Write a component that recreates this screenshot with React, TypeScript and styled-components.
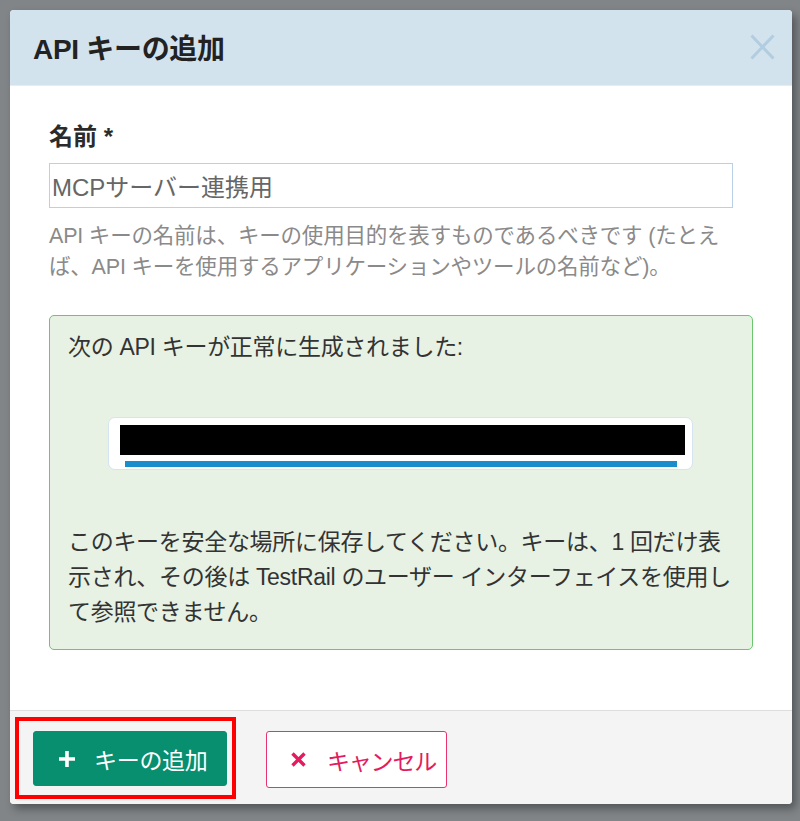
import React from "react";
import styled, { createGlobalStyle } from "styled-components";

const GlobalStyle = createGlobalStyle`
  html, body { margin: 0; padding: 0; background: #818588; }
  body { font-family: "Liberation Sans", "Noto Sans CJK JP", sans-serif; }
  * { box-sizing: border-box; }
`;

const Page = styled.div`
  width: 800px;
  height: 821px;
  padding: 10px 0 0 10px;
  background: #818588;
`;

const Dialog = styled.div`
  width: 782px;
  height: 794px;
  background: #ffffff;
  border-radius: 4px;
  overflow: hidden;
  display: flex;
  flex-direction: column;
  box-shadow: 4px 5px 8px rgba(0, 0, 0, 0.35);
`;

const Header = styled.div`
  height: 76px;
  flex: none;
  background: #d3e3ee;
  border-bottom: 1px solid #e4edf4;
  display: flex;
  align-items: center;
  justify-content: space-between;
  padding: 0 17px 2px 23px;
`;

const Title = styled.h1`
  margin: 0;
  font-size: 28px;
  font-weight: 700;
  color: #222;
  letter-spacing: -0.3px;
`;

const CloseButton = styled.button`
  border: 0;
  background: transparent;
  padding: 0;
  width: 25px;
  height: 26px;
  display: flex;
  cursor: pointer;
`;

const Body = styled.div`
  flex: 1;
  padding: 36px 39px 0 39px;
  display: flex;
  flex-direction: column;
`;

const Label = styled.label`
  font-size: 24px;
  line-height: 30px;
  font-weight: 700;
  color: #2b2b2b;
  margin-bottom: 11px;
`;

const Input = styled.input`
  width: 684px;
  height: 45px;
  border: 1px solid #b9d1e6;
  border-radius: 0;
  padding: 0 2px;
  font-family: "Liberation Sans", "Noto Sans CJK JP", sans-serif;
  font-size: 24px;
  color: #666;
  outline: none;
  background: #fff;
`;

const Help = styled.p`
  margin: 13px 0 0 0;
  max-width: 688px;
  font-size: 21.5px;
  line-height: 31px;
  color: #8a8a8a;
  letter-spacing: -0.2px;
`;

const Alert = styled.div`
  margin-top: 32px;
  height: 335px;
  border: 1.5px solid #6cc56f;
  border-radius: 5px;
  background: #e7f1e4;
  padding: 15px 18px 0 18px;
  display: flex;
  flex-direction: column;
  color: #333;
`;

const AlertText = styled.p<{ $lh: number }>`
  margin: 0;
  max-width: 664px;
  font-size: 23px;
  line-height: ${(p) => p.$lh}px;
  letter-spacing: -0.3px;
`;

const KeyField = styled.div`
  margin: 54px 0 55px 40px;
  width: 585px;
  height: 53px;
  background: #fff;
  border: 1.5px solid #d6e4f2;
  border-radius: 7px;
  padding: 7px 7px 0 11px;
  display: flex;
  flex-direction: column;
`;

const Redacted = styled.div`
  height: 30px;
  background: #000;
`;

const Underline = styled.div`
  height: 6px;
  margin: 6px 8px 0 5px;
  background: #1a8dcb;
`;

const Footer = styled.div`
  flex: none;
  height: 94px;
  background: #f4f4f4;
  border-top: 1px solid #dedede;
  display: flex;
  align-items: flex-start;
  padding: 20px 0 0 23px;
  gap: 39px;
`;

const Highlight = styled.div`
  position: relative;
  display: flex;
`;

const HighlightFrame = styled.span`
  position: absolute;
  left: -18px;
  top: -14px;
  right: -9px;
  bottom: -13px;
  border: 4px solid #ff0000;
  pointer-events: none;
`;

const Button = styled.button<{ $variant: "primary" | "cancel" }>`
  display: flex;
  align-items: center;
  height: ${(p) => (p.$variant === "primary" ? 55 : 57)}px;
  width: ${(p) => (p.$variant === "primary" ? 194 : 181)}px;
  padding: 0 0 0 24px;
  border-radius: 3px;
  font-family: "Liberation Sans", "Noto Sans CJK JP", sans-serif;
  font-size: 23px;
  letter-spacing: ${(p) => (p.$variant === "primary" ? -0.3 : -1.2)}px;
  cursor: pointer;
  background: ${(p) => (p.$variant === "primary" ? "#078f6f" : "#ffffff")};
  color: ${(p) => (p.$variant === "primary" ? "#ffffff" : "#e31b5f")};
  border: ${(p) =>
    p.$variant === "primary" ? "1px solid #078f6f" : "1.5px solid #e8336e"};
`;

const ButtonIcon = styled.span<{ $gap: number }>`
  display: flex;
  margin-right: ${(p) => p.$gap}px;
`;

export default function App() {
  return (
    <>
      <GlobalStyle />
      <Page>
        <Dialog>
          <Header>
            <Title>API キーの追加</Title>
            <CloseButton aria-label="閉じる">
              <svg width="25" height="26" viewBox="0 0 25 26">
                <path
                  d="M1.5 1.5 L23.5 24.5 M23.5 1.5 L1.5 24.5"
                  stroke="#b2cce0"
                  strokeWidth="3"
                  fill="none"
                />
              </svg>
            </CloseButton>
          </Header>
          <Body>
            <Label>名前 *</Label>
            <Input defaultValue="MCPサーバー連携用" />
            <Help>
              API キーの名前は、キーの使用目的を表すものであるべきです (たとえば、API キーを使用するアプリケーションやツールの名前など)。
            </Help>
            <Alert>
              <AlertText $lh={32}>次の API キーが正常に生成されました:</AlertText>
              <KeyField>
                <Redacted />
                <Underline />
              </KeyField>
              <AlertText $lh={35}>
                このキーを安全な場所に保存してください。キーは、1 回だけ表示され、その後は TestRail のユーザー インターフェイスを使用して参照できません。
              </AlertText>
            </Alert>
          </Body>
          <Footer>
            <Highlight>
              <Button $variant="primary">
                <ButtonIcon $gap={18}>
                  <svg width="18" height="18" viewBox="0 0 18 18">
                    <path
                      d="M9 1 V17 M1 9 H17"
                      stroke="#ffffff"
                      strokeWidth="3.6"
                      fill="none"
                    />
                  </svg>
                </ButtonIcon>
                キーの追加
              </Button>
              <HighlightFrame />
            </Highlight>
            <Button $variant="cancel">
              <ButtonIcon $gap={21}>
                <svg width="15" height="15" viewBox="0 0 15 15">
                  <path
                    d="M1.5 1.5 L13.5 13.5 M13.5 1.5 L1.5 13.5"
                    stroke="#e31b5f"
                    strokeWidth="3.4"
                    fill="none"
                  />
                </svg>
              </ButtonIcon>
              キャンセル
            </Button>
          </Footer>
        </Dialog>
      </Page>
    </>
  );
}
